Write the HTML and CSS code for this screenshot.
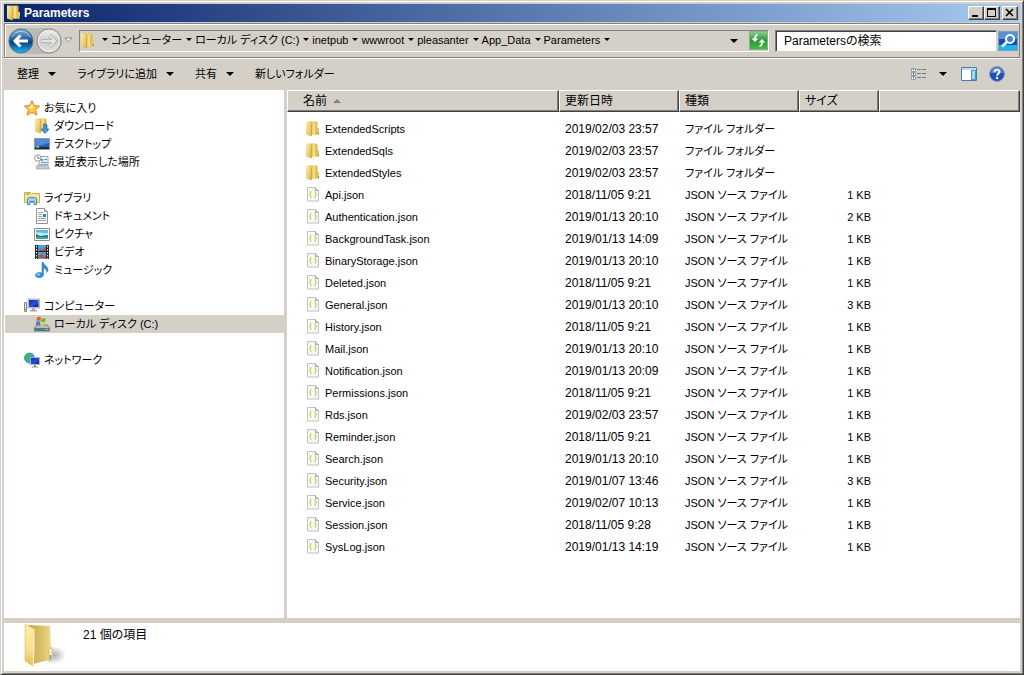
FILE: index.html
```html
<!DOCTYPE html>
<html lang="ja">
<head>
    <meta charset="UTF-8">
    <meta name="viewport" content="width=device-width, initial-scale=1.0">
    <title>Parameters</title>
    <link rel="stylesheet" href="styles.css">
</head>
<body>
    <svg class="defs" width="0" height="0" aria-hidden="true">
        <defs>
            <linearGradient id="gold" x1="0" y1="0" x2="1" y2="1">
                <stop offset="0" stop-color="#fbf0b4"/>
                <stop offset="1" stop-color="#dcb440"/>
            </linearGradient>
            <linearGradient id="blueBtn" x1="0" y1="0" x2="0" y2="1">
                <stop offset="0" stop-color="#7fb4dc"/>
                <stop offset=".45" stop-color="#1c5c9e"/>
                <stop offset=".55" stop-color="#0b3c7c"/>
                <stop offset="1" stop-color="#18c0f4"/>
            </linearGradient>
            <linearGradient id="greyBtn" x1="0" y1="0" x2="0" y2="1">
                <stop offset="0" stop-color="#f2f2f0"/>
                <stop offset=".5" stop-color="#ccccca"/>
                <stop offset="1" stop-color="#e2e2e0"/>
            </linearGradient>
            <linearGradient id="bigGold" x1="0" y1="0" x2="0" y2="1">
                <stop offset="0" stop-color="#fbeea8"/>
                <stop offset=".6" stop-color="#f6e08c"/>
                <stop offset="1" stop-color="#e3bf55"/>
            </linearGradient>
            <linearGradient id="bigBack" x1="0" x2="1">
                <stop offset="0" stop-color="#c4a850"/>
                <stop offset=".6" stop-color="#dcc26c"/>
                <stop offset="1" stop-color="#f4e292"/>
            </linearGradient>
            <linearGradient id="green" x1="0" y1="0" x2="0" y2="1">
                <stop offset="0" stop-color="#8cd08c"/>
                <stop offset=".5" stop-color="#28983a"/>
                <stop offset="1" stop-color="#3cc040"/>
            </linearGradient>
            <radialGradient id="shade">
                <stop offset="0" stop-color="#888" stop-opacity=".7"/>
                <stop offset="1" stop-color="#888" stop-opacity="0"/>
            </radialGradient>
            <linearGradient id="screen" x1="0" y1="0" x2="1" y2="1">
                <stop offset="0" stop-color="#0a1fb8"/>
                <stop offset=".5" stop-color="#2a50e0"/>
                <stop offset="1" stop-color="#0a1a90"/>
            </linearGradient>
        </defs>
        <symbol id="folder" viewBox="0 0 16 16">
            <path d="M4 .5h7.500v13H6z" fill="#dfbf58"/>
            <path d="M7.500 1h3v12.500h-3z" fill="#f2dc84"/>
            <path d="M10.500 1h2v12.500h-2z" fill="#dcba54"/>
            <path d="M12 7h2v6.500l-2 .5z" fill="#e4c668"/>
            <path d="M1 .5h2.500L6.500 3v12.500L1 13.500z" fill="url(#gold)"/>
            <path d="M6.500 3v12" stroke="#c8a040" stroke-width=".7"/>
            <path d="M13.500 11v2" stroke="#3c9cd8"/>
        </symbol>
        <symbol id="json" viewBox="0 0 16 16">
            <path d="M2.500.5h8l3 3v10.500h-11z" fill="#f8f8f8" stroke="#c0c0c0"/>
            <path d="M10.500.5v3h3" fill="#ddd" stroke="#a8a8a8"/>
            <path d="M6.500 4.500c-1.500 0-.6 2-1.500 3 .9 1 0 3 1.500 3M9.500 4.500c1.500 0 .6 2 1.500 3-.9 1 0 3-1.500 3" fill="none" stroke="#ccd060" stroke-width="1.300"/>
        </symbol>
        <symbol id="monitor" viewBox="0 0 16 16">
            <path d="M4 1h11.500v9H4z" fill="#dcdcdc" stroke="#888" stroke-width=".6"/>
            <path d="M5 2h9.500v7H5z" fill="url(#screen)"/>
            <path d="M8 10h3v2h2v1.500H6V12h2z" fill="#a8a8a8"/>
        </symbol>
    </svg>

    <div class="window">
        <header class="titlebar">
            <svg class="icon"><use href="#folder"/></svg>
            <h1 class="title">Parameters</h1>
            <div class="captions">
                <button class="caption" aria-label="最小化"><svg width="12" height="10"><path d="M2 7h6v2H2z"/></svg></button>
                <button class="caption" aria-label="最大化"><svg width="12" height="10"><path d="M1 0h9v9H1zM2 2v6h7V2z" fill-rule="evenodd"/></svg></button>
                <button class="caption close" aria-label="閉じる"><svg width="12" height="10"><path d="M2 1l7 7M9 1L2 8" stroke="#000" stroke-width="1.600"/></svg></button>
            </div>
        </header>

        <div class="navbar">
            <div class="history">
                <button class="round" aria-label="戻る">
                    <svg width="26" height="26" viewBox="0 0 26 26">
                        <circle cx="13" cy="13" r="12" fill="url(#blueBtn)" stroke="#58738c"/>
                        <path d="M4 9a10 10 0 0 1 18 0" fill="none" stroke="#c8e0f0" opacity=".7"/>
                        <path d="M20 13H7M12.500 7.500L7 13l5.500 5.500" fill="none" stroke="#fff" stroke-width="3"/>
                    </svg>
                </button>
                <button class="round" aria-label="進む">
                    <svg width="26" height="26" viewBox="0 0 26 26">
                        <circle cx="13" cy="13" r="12" fill="url(#greyBtn)" stroke="#8c8c8c"/>
                        <circle cx="13" cy="13" r="10.500" fill="none" stroke="#eee"/>
                        <path d="M6 13h13M13.500 7.500L19 13l-5.500 5.500" fill="none" stroke="#b4b4b4" stroke-width="4"/>
                        <path d="M6 13h13M13.500 7.500L19 13l-5.500 5.500" fill="none" stroke="#e4e4e4" stroke-width="2"/>
                    </svg>
                </button>
            </div>
            <button class="recent" aria-label="最近表示したページ"><svg width="9" height="7"><path d="M1 1h7L4.500 5z" fill="#fff" stroke="#888"/></svg></button>
            <nav class="address" aria-label="アドレス">
                <svg class="icon"><use href="#folder"/></svg>
                <ol class="crumbs">
                    <li><a href="#">コンピューター</a></li>
                    <li><a href="#">ローカル ディスク (C:)</a></li>
                    <li><a href="#">inetpub</a></li>
                    <li><a href="#">wwwroot</a></li>
                    <li><a href="#">pleasanter</a></li>
                    <li><a href="#">App_Data</a></li>
                    <li><a href="#">Parameters</a></li>
                </ol>
                <button class="history-drop" aria-label="以前の場所"><span class="arrow"></span></button>
                <button class="refresh" aria-label="最新の情報に更新">
                    <svg width="19" height="19" viewBox="0 0 19 19">
                        <rect x=".5" y=".5" width="18" height="18" fill="url(#green)" stroke="#8fae8c"/>
                        <path d="M8.500 4C6.500 4 6 5.500 6 8M10.500 15c2 0 2.500-1.500 2.500-4" fill="none" stroke="#fff" stroke-width="1.800"/>
                        <path d="M2.500 7.500h7L6 11zM9.500 11.500h7L13 8z" fill="#fff"/>
                    </svg>
                </button>
            </nav>
            <form class="search">
                <input type="text" class="search-box" aria-label="検索" placeholder="Parametersの検索">
                <button type="button" class="search-button" aria-label="検索を実行">
                    <svg width="20" height="20" viewBox="0 0 20 20">
                        <rect x=".5" y=".5" width="19" height="19" fill="#1450b4" stroke="#7c9cc4"/>
                        <path d="M1 1h18v7H1z" fill="#5c90d4"/>
                        <path d="M1 14h18v5H1z" fill="#20b4ec"/>
                        <circle cx="12" cy="8" r="4" fill="#4484d0" stroke="#fff" stroke-width="2"/>
                        <path d="M9 11l-5 4.500" stroke="#fff" stroke-width="2.600"/>
                    </svg>
                </button>
            </form>
        </div>

        <div class="toolbar">
            <button class="tool">整理<span class="arrow"></span></button>
            <button class="tool">ライブラリに追加<span class="arrow"></span></button>
            <button class="tool">共有<span class="arrow"></span></button>
            <button class="tool">新しいフォルダー</button>
            <div class="tool-right">
                <button class="tool view" aria-label="表示方法の変更">
                    <svg width="16" height="14" viewBox="0 0 16 14">
                        <path d="M.5 1.500h4v3h-4zM.5 5.500h4v3h-4zM.5 9.500h4v3h-4z" fill="#fff" stroke="#8a9cb0"/>
                        <path d="M2 2h1v1H2zM2 10h1v1H2z" fill="#305890"/>
                        <path d="M2 6h1v2H2z" fill="#c03030"/>
                        <path d="M6 2.500h4m1 0h4M6 6.500h4m1 0h4M6 10.500h4m1 0h4" stroke="#6c7c8c"/>
                    </svg>
                    <span class="arrow"></span>
                </button>
                <button class="tool" aria-label="プレビュー ウィンドウ">
                    <svg width="16" height="14" viewBox="0 0 16 14">
                        <path d="M.5.5h15v13H.5z" fill="#fff" stroke="#4c7ca8"/>
                        <path d="M1 1h14v2H1z" fill="#c4dcf0"/>
                        <path d="M10.500 3.500h4v9h-4z" fill="#9cdcf0" stroke="#4c90b8"/>
                    </svg>
                </button>
                <button class="tool" aria-label="ヘルプ">
                    <svg width="16" height="16" viewBox="0 0 16 16">
                        <circle cx="8" cy="8" r="7.500" fill="#2450b4" stroke="#8ca0c4"/>
                        <path d="M2 7a6 6 0 0 1 12 0z" fill="#6c94dc" opacity=".7"/>
                        <path d="M5.500 6.200c0-3.400 5-3.200 5-.4 0 1.800-2.300 1.800-2.300 4" fill="none" stroke="#fff" stroke-width="1.900"/>
                        <circle cx="8.100" cy="12" r="1.200" fill="#fff"/>
                    </svg>
                </button>
            </div>
        </div>

        <div class="panes">
            <nav class="tree" aria-label="ナビゲーション">
                <ul class="group">
                    <li><a class="node" href="#">
                        <svg class="icon" viewBox="0 0 16 16"><path d="M8 .8l2.200 4.800 5.300.5-4 3.600 1.300 5.400L8 12.300l-4.800 2.800 1.300-5.400-4-3.600 5.300-.5z" fill="#ffc940" stroke="#dc7c24"/><path d="M8 3l1.500 3.500L8 9 5 8.500z" fill="#fff0a0"/></svg>
                        お気に入り</a></li>
                    <li><a class="node child" href="#">
                        <svg class="icon" viewBox="0 0 16 16"><use href="#folder"/><path d="M9.500 6h3v5H15l-4 4.500L7 11h2.500z" fill="#3c9ce0" stroke="#1c64a8" stroke-width=".7"/></svg>
                        ダウンロード</a></li>
                    <li><a class="node child" href="#">
                        <svg class="icon" viewBox="0 0 16 16"><path d="M.5 2.500h15v11H.5z" fill="#2c5cb8" stroke="#8c98a8"/><path d="M1 3h14v4L1 11z" fill="#5088dc"/><path d="M1 11h14v2H1z" fill="#1c2c48"/><path d="M2 10h2v2H2z" fill="#48c060"/><path d="M4 10h1v2H4z" fill="#f0b020"/></svg>
                        デスクトップ</a></li>
                    <li><a class="node child" href="#">
                        <svg class="icon" viewBox="0 0 16 16"><path d="M5 2.500h9v8H5z" fill="#f0f4f8" stroke="#98a4ac"/><path d="M7 5h2v2H7zM10 5h3v1h-3zM7 8h6v1H7z" fill="#4898d0"/><path d="M3 11h11l1.500 4H2z" fill="#c4c8cc" stroke="#989ca0" stroke-width=".6"/><circle cx="3.800" cy="4" r="3.200" fill="#fff" stroke="#909aa0"/><path d="M3.800 2v2.300h2" fill="none" stroke="#555" stroke-width=".8"/></svg>
                        最近表示した場所</a></li>
                </ul>
                <ul class="group">
                    <li><a class="node" href="#">
                        <svg class="icon" viewBox="0 0 16 16"><path d="M.5 2.500h6l1 1h8v9H.5z" fill="#f8e49c" stroke="#ccae58"/><path d="M2 4h4" stroke="#60a040"/><path d="M3.500 14.500v-6l2-1h5l2 1v6H10v-3H6v3z" fill="#9cd4f0" stroke="#3c8cc0"/></svg>
                        ライブラリ</a></li>
                    <li><a class="node child" href="#">
                        <svg class="icon" viewBox="0 0 16 16"><path d="M2.500.5h8l3 3v12h-11z" fill="#fff" stroke="#8c949c"/><path d="M10.500.5v3h3" fill="#ddd" stroke="#8c949c"/><path d="M4 4.500h5M4 6.500h4M4 8.500h4M4 10.500h8M4 12.500h8" stroke="#98a4b8"/><path d="M9 6h3v3H9z" fill="#2c80c4"/></svg>
                        ドキュメント</a></li>
                    <li><a class="node child" href="#">
                        <svg class="icon" viewBox="0 0 16 16"><path d="M.5 2.500h15v12H.5z" fill="#fff" stroke="#8c8c8c"/><path d="M2 4h12v9H2z" fill="#60b8e4"/><path d="M2 7c4-2 5 1 12 0v3H2z" fill="#c4ecf4"/><path d="M2 8l4 2 8-1v2H2z" fill="#247c58"/><path d="M2 11h12v2H2z" fill="#3ca4b4"/></svg>
                        ピクチャ</a></li>
                    <li><a class="node child" href="#">
                        <svg class="icon" viewBox="0 0 16 16"><path d="M1 1h14v14H1z" fill="#202830"/><path d="M4 1h8v6H4zM4 8h8v7H4z" fill="#4ca0d8"/><path d="M5 4l3 2 4-3v4H6zM4 12l4-2 2 2 2-1v3H6z" fill="#c04c40"/><path d="M2.500 2v13M13.500 2v13" stroke="#e8e8e8" stroke-dasharray="1.500 1.500"/></svg>
                        ビデオ</a></li>
                    <li><a class="node child" href="#">
                        <svg class="icon" viewBox="0 0 16 16"><path d="M8 .5h1.500c0 3 4.500 3.500 4.500 7 0 1.500-.8 2.500-1.500 3 .5-3-1-4-3-4.500v6.500c0 4-8 4.200-8 .8 0-2.300 3.500-3.600 6.500-2.300z" fill="#2c90dc" stroke="#1c6cb0" stroke-width=".5"/><ellipse cx="4.500" cy="12.500" rx="1.800" ry="1" fill="#98d4f8"/></svg>
                        ミュージック</a></li>
                </ul>
                <ul class="group">
                    <li><a class="node" href="#">
                        <svg class="icon" viewBox="0 0 16 16"><use href="#monitor"/><path d="M.5 4.500h2v9h-2z" fill="#e0e0e0" stroke="#888"/><path d="M1 11h1v1H1z" fill="#30b030"/></svg>
                        コンピューター</a></li>
                    <li><a class="node child selected" href="#">
                        <svg class="icon" viewBox="0 0 16 16"><path d="M3 9h10l2.500 2.500v3.500H.5v-3.500z" fill="#b8bcc0" stroke="#64686c" stroke-width=".8"/><path d="M1 12h14v3H1z" fill="#4c7c90"/><path d="M11 13h3v1h-3z" fill="#58e058"/><path d="M3 1.500c1.500-1 3-1 4 0L6.500 5c-1.300-.8-2.500-.8-4 0z" fill="#e86030"/><path d="M7.700 2c1.300.8 2.800.8 4 0L11 5.500c-1.300.8-2.600.6-3.800 0z" fill="#60b830"/><path d="M2.300 5.800c1.300-.8 2.600-.8 4 0L5.800 9c-1.200-.8-2.500-.8-4 0z" fill="#3880dc"/><path d="M7 6.400c1.300.7 2.600.7 4 0L10.300 9.500c-1.300.7-2.600.7-3.800 0z" fill="#f8c428"/></svg>
                        ローカル ディスク (C:)</a></li>
                </ul>
                <ul class="group">
                    <li><a class="node" href="#">
                        <svg class="icon" viewBox="0 0 16 16"><circle cx="5.500" cy="6" r="5" fill="#38a0dc" stroke="#1c6cac" stroke-width=".6"/><path d="M2 3c2-2 4-2 5 0L5 5l1 2-3 2-2-3z" fill="#44b84c"/><path d="M6.500 5.500h9v7h-9z" fill="url(#screen)" stroke="#b0b4b8"/><path d="M10 13h2v1.500h2v1H8v-1h2z" fill="#909498"/></svg>
                        ネットワーク</a></li>
                </ul>
            </nav>

            <main class="list">
                <table class="files">
                    <colgroup>
                        <col class="col-name"><col class="col-date"><col class="col-type"><col class="col-size"><col>
                    </colgroup>
                    <thead>
                        <tr>
                            <th class="name"><button class="sort">名前<span class="up"></span></button></th>
                            <th><button class="sort">更新日時</button></th>
                            <th><button class="sort">種類</button></th>
                            <th><button class="sort">サイズ</button></th>
                            <td class="filler"></td>
                        </tr>
                    </thead>
                    <tbody id="rows"></tbody>
                </table>
            </main>
        </div>

        <footer class="details">
            <svg width="44" height="46" viewBox="0 0 44 46">
                <ellipse cx="30" cy="32" rx="13" ry="9" fill="url(#shade)"/>
                <path d="M5 2l22 1 1 22 2 1v10l-20 5z" fill="url(#bigBack)"/>
                <path d="M2 1l9 5v22l-1 15L2 38z" fill="url(#bigGold)" stroke="#dcc060" stroke-width=".6"/>
                <path d="M11 6v22l-1 14" fill="none" stroke="#fff6cc"/>
                <path d="M26 25h3v11l-3 2z" fill="#fff" stroke="#d8b850"/>
                <path d="M27.500 32v4" stroke="#38a0e0" stroke-width="1.500"/>
            </svg>
            <p class="count">21 個の項目</p>
        </footer>
    </div>

    <script>
        const files = [
            ["ExtendedScripts", "2019/02/03 23:57", ""],
            ["ExtendedSqls", "2019/02/03 23:57", ""],
            ["ExtendedStyles", "2019/02/03 23:57", ""],
            ["Api.json", "2018/11/05 9:21", "1 KB"],
            ["Authentication.json", "2019/01/13 20:10", "2 KB"],
            ["BackgroundTask.json", "2019/01/13 14:09", "1 KB"],
            ["BinaryStorage.json", "2019/01/13 20:10", "1 KB"],
            ["Deleted.json", "2018/11/05 9:21", "1 KB"],
            ["General.json", "2019/01/13 20:10", "3 KB"],
            ["History.json", "2018/11/05 9:21", "1 KB"],
            ["Mail.json", "2019/01/13 20:10", "1 KB"],
            ["Notification.json", "2019/01/13 20:09", "1 KB"],
            ["Permissions.json", "2018/11/05 9:21", "1 KB"],
            ["Rds.json", "2019/02/03 23:57", "1 KB"],
            ["Reminder.json", "2018/11/05 9:21", "1 KB"],
            ["Search.json", "2019/01/13 20:10", "1 KB"],
            ["Security.json", "2019/01/07 13:46", "3 KB"],
            ["Service.json", "2019/02/07 10:13", "1 KB"],
            ["Session.json", "2018/11/05 9:28", "1 KB"],
            ["SysLog.json", "2019/01/13 14:19", "1 KB"]
        ];

        document.getElementById("rows").innerHTML = files.map(([name, date, size]) => `
            <tr>
                <td class="name"><span class="file"><svg class="icon"><use href="#${size ? "json" : "folder"}"/></svg>${name}</span></td>
                <td class="date">${date}</td>
                <td>${size ? "JSON ソース ファイル" : "ファイル フォルダー"}</td>
                <td class="size">${size}</td>
                <td></td>
            </tr>`).join("");
    </script>
</body>
</html>
```
FILE: styles.css
```css
* {
    box-sizing: border-box;
}
body {
    margin: 0;
    background: #d4d0c8;
    font-family: "Liberation Sans", "Noto Sans CJK JP", sans-serif;
    font-size: 12px;
    line-height: 18px;
    font-feature-settings: "palt";
    color: #000;
    white-space: nowrap;
}
button, input {
    font: inherit;
    font-feature-settings: inherit;
    color: inherit;
    border: 0;
    padding: 0;
    background: none;
}
a {
    color: inherit;
    text-decoration: none;
}
ul, ol {
    list-style: none;
    margin: 0;
    padding: 0;
}
svg {
    display: block;
    flex: none;
}
.defs {
    position: absolute;
}
.icon {
    width: 16px;
    height: 16px;
}
.arrow {
    display: block;
    flex: none;
    border: 4px solid transparent;
    border-top-color: #000;
    border-bottom: 0;
}

/* window frame */
.window {
    display: flex;
    flex-direction: column;
    min-height: 100vh;
    border: 1px solid #d4d0c8;
    border-right-color: #404040;
    border-bottom-color: #404040;
    box-shadow: inset 1px 1px #fff, inset -1px -1px #808080;
    padding: 3px;
}
.titlebar {
    display: flex;
    align-items: center;
    height: 18px;
    padding: 0 2px;
    background: linear-gradient(90deg, #0a246a, #a6caf0);
    color: #fff;
}
.title {
    flex: 1;
    margin: 0 0 0 2px;
    font-size: 12px;
}
.captions {
    display: flex;
}
.caption {
    width: 16px;
    height: 14px;
    padding: 1px;
    background: #d4d0c8;
    border: 1px solid;
    border-color: #fff #404040 #404040 #fff;
    box-shadow: inset -1px -1px #808080;
}
.close {
    margin-left: 2px;
}

/* address row */
.navbar {
    display: flex;
    align-items: center;
    height: 35px;
    margin-top: 1px;
    padding: 0 1px 0 3px;
    border: 1px solid #808080;
    box-shadow: inset 1px 1px #fff, 0 1px #fff;
}
.history {
    display: flex;
    gap: 2px;
    border-radius: 13px;
    background: #bcbab6;
}
.round {
    width: 26px;
    height: 26px;
}
.recent {
    margin: 0 6px 0 2px;
}
.address {
    display: flex;
    flex: 1;
    align-items: center;
    height: 22px;
    border: 1px solid #808080;
    border-right-color: #fff;
    border-bottom-color: #fff;
}
.crumbs {
    display: flex;
    flex: 1;
    padding-left: 2px;
    font-size: 11px;
}
.crumbs li {
    display: flex;
    align-items: center;
    padding-bottom: 2px;
}
.crumbs li::after, .crumbs li:first-child::before {
    content: "";
    margin: 0 3px 0 4px;
    border: 3px solid transparent;
    border-top-color: #000;
    border-bottom: 0;
}
.history-drop {
    margin-right: 11px;
}
.search {
    display: flex;
    align-items: center;
    gap: 1px;
    margin-left: 6px;
}
.search-box {
    width: 222px;
    height: 22px;
    padding: 0 8px;
    background: #fff;
    border: 1px solid #808080;
    border-right-color: #d4d0c8;
    border-bottom-color: #d4d0c8;
    box-shadow: inset 1px 1px #404040;
}
.search-box::placeholder {
    color: #000;
    opacity: 1;
}

/* command bar */
.toolbar {
    display: flex;
    align-items: center;
    gap: 21px;
    height: 30px;
    margin: 1px 0;
    padding: 0 15px 0 13px;
    font-size: 11px;
}
.tool {
    display: flex;
    align-items: center;
    gap: 9px;
}
.tool-right {
    display: flex;
    align-items: center;
    gap: 12px;
    margin-left: auto;
}
.view {
    gap: 12px;
    margin-right: 2px;
}

/* panes */
.panes {
    display: grid;
    grid-template-columns: 280px 1fr;
    gap: 3px;
    flex: 1;
}
.tree {
    padding-top: 9px;
    background: #fff;
    font-size: 11px;
}
.group {
    margin-bottom: 18px;
}
.node {
    display: flex;
    align-items: center;
    gap: 4px;
    height: 18px;
    margin-left: 1px;
    padding-left: 19px;
}
.child {
    padding-left: 29px;
}
.selected {
    background: #d4d0c8;
}
.list {
    background: #fff;
}
.files {
    width: 100%;
    table-layout: fixed;
    border-collapse: separate;
    border-spacing: 0;
}
.col-name {
    width: 272px;
}
.col-date, .col-type {
    width: 120px;
}
.col-size {
    width: 80px;
}
.files th, .filler {
    height: 22px;
    padding: 0 5px;
    background: #d4d0c8;
    border: 1px solid;
    border-color: #fff #404040 #404040 #fff;
    box-shadow: inset -1px -1px #808080;
    font-weight: normal;
    text-align: left;
}
.files th.name {
    padding-left: 15px;
}
.sort {
    display: flex;
    align-items: center;
    gap: 6px;
}
.up {
    border: 4px solid transparent;
    border-bottom-color: #808080;
    border-top: 0;
}
.files tbody td {
    height: 22px;
    padding: 0 6px;
    font-size: 11px;
}
.files tbody td.date {
    font-size: 12px;
}
.files tbody tr:first-child td {
    height: 28px;
    padding-top: 6px;
}
.files tbody td.name {
    padding-left: 18px;
}
.file {
    display: flex;
    align-items: center;
    gap: 4px;
}
.files tbody td.size {
    padding-right: 8px;
    text-align: right;
}

/* details */
.details {
    display: flex;
    gap: 16px;
    height: 48px;
    margin-top: 5px;
    padding-left: 19px;
    background: #fff;
}
.count {
    margin: 3px 0;
}
```
